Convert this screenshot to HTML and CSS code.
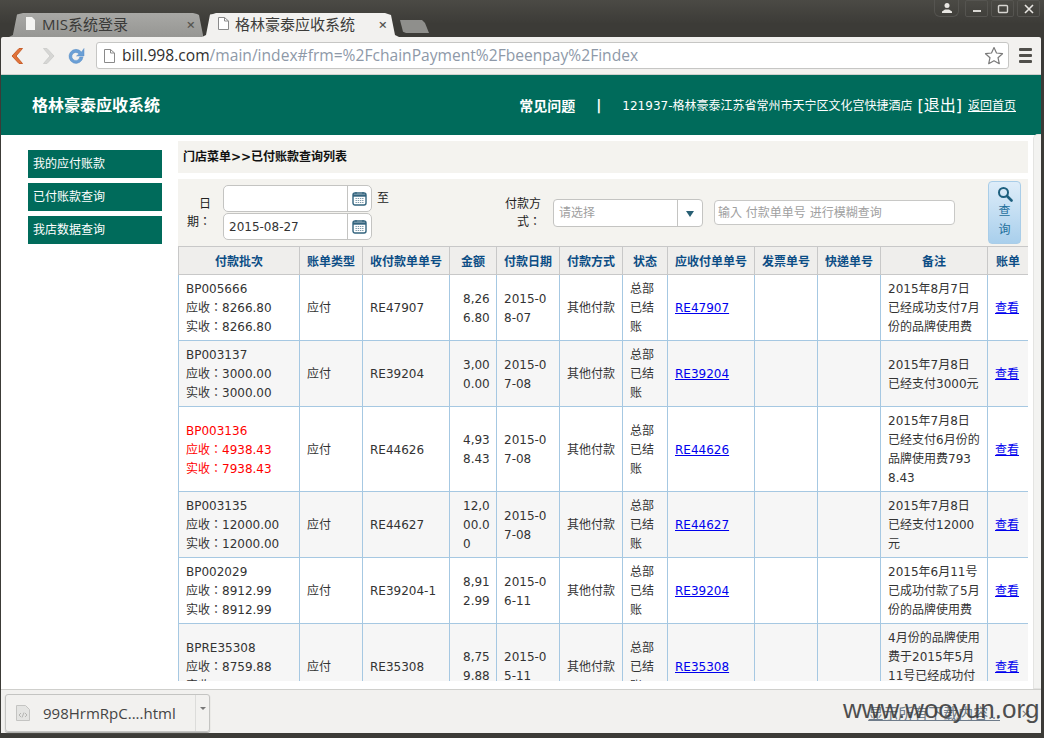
FILE: index.html
```html
<!DOCTYPE html>
<html lang="en">
<head>
<meta charset="UTF-8">
<title>格林豪泰应收系统</title>
<link rel="stylesheet" href="styles.css">
</head>
<body>
<div class="window">

  <!-- browser tabs -->
  <div class="titlebar">
    <div class="tab tab-off">
      <svg class="file-icon" width="11" height="13" viewBox="0 0 11 13"><path d="M1 0h6l3 3v10H1z" fill="#f4f4f2"/></svg>
      <span class="tab-title">MIS系统登录</span>
      <span class="tab-close">×</span>
    </div>
    <div class="tab tab-on">
      <svg class="file-icon" width="11" height="13" viewBox="0 0 11 13"><path d="M.5.5h6l4 3.5v8.500H.5z" fill="#fff" stroke="#8a8a8a"/><path d="M6.500.5V4h4" fill="none" stroke="#8a8a8a"/></svg>
      <span class="tab-title">格林豪泰应收系统</span>
      <span class="tab-close">×</span>
    </div>
    <div class="tab-new"></div>
    <div class="win-btns">
      <div class="win-btn win-user"><svg width="12" height="12" viewBox="0 0 12 12"><circle cx="6" cy="3.500" r="2.500" fill="#e8e6e2"/><path d="M1 11V9.500L4 7.500h4l3 2V11z" fill="#e8e6e2"/></svg></div>
      <div class="win-btn"><svg width="12" height="12" viewBox="0 0 12 12"><path d="M2 8h8" stroke="#d8d6d2" stroke-width="2"/></svg></div>
      <div class="win-btn"><svg width="12" height="12" viewBox="0 0 12 12"><rect x="1.500" y="2.500" width="9" height="7" rx="1" fill="none" stroke="#d8d6d2" stroke-width="1.400"/></svg></div>
      <div class="win-btn"><svg width="12" height="12" viewBox="0 0 12 12"><path d="M2 2l8 8M10 2l-8 8" stroke="#e8e6e2" stroke-width="1.600"/></svg></div>
    </div>
  </div>

  <!-- address bar -->
  <div class="toolbar">
    <svg class="nav-icon" width="16" height="18" viewBox="0 0 16 18"><path d="M10 1.500L3 9l7 7.500h3.500L7 9l6.500-7.500z" fill="#e2733a" stroke="#c8602c" stroke-width="1" stroke-linejoin="round"/></svg>
    <svg class="nav-icon nav-fwd" width="16" height="18" viewBox="0 0 16 18"><path d="M6 1.500L13 9l-7 7.500H2.500L9 9 2.500 1.500z" fill="#d6d6d4" stroke="#cfcfcd" stroke-linejoin="round"/></svg>
    <svg class="nav-icon nav-reload" width="18" height="18" viewBox="0 0 18 18"><path d="M14.500 5A7 7 0 1 0 16 10h-3.200a4 4 0 1 1-.8-3L9.500 9H17V1.500z" fill="#6a9fd6" stroke="#5a8ec4" stroke-width=".5"/></svg>
    <div class="omnibox">
      <svg class="file-icon" width="11" height="14" viewBox="0 0 11 14"><path d="M.5.500h6l4 3.500v9.500H.5z" fill="#fff" stroke="#8a8a8a"/><path d="M6.500.5V4h4" fill="none" stroke="#8a8a8a"/></svg>
      <span class="url"><span class="url-host">bill.998.com</span>/main/index#frm=%2FchainPayment%2Fbeenpay%2Findex</span>
      <svg class="star" width="20" height="19" viewBox="0 0 20 19"><path d="M10 1.500l2.500 5.500 6 .7-4.500 4 1.300 6L10 14.700 4.700 17.700l1.300-6-4.500-4 6-.7z" fill="#fff" stroke="#7a7a7a" stroke-width="1.200" stroke-linejoin="round"/></svg>
    </div>
    <div class="menu-btn"><i></i><i></i><i></i></div>
  </div>

  <!-- the page -->
  <div class="page">
    <div class="top">
      <div class="sys-name">格林豪泰应收系统</div>
      <div class="top-right">
        <span class="faq">常见问题</span>
        <span class="sep">|</span>
        <span class="shop">121937-格林豪泰江苏省常州市天宁区文化宫快捷酒店</span>
        <span class="logout">[退出]</span>
        <a class="home-link">返回首页</a>
      </div>
    </div>

    <div class="main">
      <div class="side">
        <div class="side-item">我的应付账款</div>
        <div class="side-item">已付账款查询</div>
        <div class="side-item">我店数据查询</div>
      </div>

      <div class="content">
        <div class="crumb">门店菜单&gt;&gt;已付账款查询列表</div>

        <div class="filter">
          <div class="f-label f-date">日期：</div>
          <div class="f-dates">
            <div class="date-row">
              <div class="date-box"><span class="date-val"></span><span class="date-btn"><svg width="15" height="15" viewBox="0 0 15 15"><use href="#cal"/></svg></span></div>
              <span class="to">至</span>
            </div>
            <div class="date-row">
              <div class="date-box"><span class="date-val">2015-08-27</span><span class="date-btn"><svg width="15" height="15" viewBox="0 0 15 15"><use href="#cal"/></svg></span></div>
            </div>
          </div>
          <div class="f-label f-way">付款方式：</div>
          <div class="select-box"><span class="select-val">请选择</span><span class="select-btn"></span></div>
          <div class="search-box">输入 付款单单号 进行模糊查询</div>
          <div class="query-btn">
            <svg width="16" height="16" viewBox="0 0 16 16"><circle cx="6.500" cy="6.500" r="4.500" fill="none" stroke="#1d5f7e" stroke-width="2"/><path d="M10 10l4.500 4.500" stroke="#1d5f7e" stroke-width="2.600" stroke-linecap="round"/></svg>
            <span>查询</span>
          </div>
        </div>

        <div class="table-clip">
          <table class="bills">
            <colgroup>
              <col class="c1"><col class="c2"><col class="c3"><col class="c4"><col class="c5"><col class="c6">
              <col class="c7"><col class="c8"><col class="c9"><col class="c10"><col class="c11"><col class="c12">
            </colgroup>
            <thead>
              <tr><th>付款批次</th><th>账单类型</th><th>收付款单单号</th><th>金额</th><th>付款日期</th><th>付款方式</th><th>状态</th><th>应收付单单号</th><th>发票单号</th><th>快递单号</th><th>备注</th><th>账单</th></tr>
            </thead>
            <tbody>
              <tr>
                <td>BP005666<br>应收：8266.80<br>实收：8266.80</td><td>应付</td><td>RE47907</td><td class="brk amt">8,266.80</td><td class="brk">2015-08-07</td><td>其他付款</td><td>总部已结账</td><td><a href="#">RE47907</a></td><td></td><td></td><td>2015年8月7日已经成功支付7月份的品牌使用费</td><td><a href="#">查看</a></td>
              </tr>
              <tr>
                <td>BP003137<br>应收：3000.00<br>实收：3000.00</td><td>应付</td><td>RE39204</td><td class="brk amt">3,000.00</td><td class="brk">2015-07-08</td><td>其他付款</td><td>总部已结账</td><td><a href="#">RE39204</a></td><td></td><td></td><td>2015年7月8日已经支付3000元</td><td><a href="#">查看</a></td>
              </tr>
              <tr>
                <td class="red">BP003136<br>应收：4938.43<br>实收：7938.43</td><td>应付</td><td>RE44626</td><td class="brk amt">4,938.43</td><td class="brk">2015-07-08</td><td>其他付款</td><td>总部已结账</td><td><a href="#">RE44626</a></td><td></td><td></td><td class="brk">2015年7月8日已经支付6月份的品牌使用费7938.43</td><td><a href="#">查看</a></td>
              </tr>
              <tr>
                <td>BP003135<br>应收：12000.00<br>实收：12000.00</td><td>应付</td><td>RE44627</td><td class="brk amt">12,000.00</td><td class="brk">2015-07-08</td><td>其他付款</td><td>总部已结账</td><td><a href="#">RE44627</a></td><td></td><td></td><td>2015年7月8日已经支付12000元</td><td><a href="#">查看</a></td>
              </tr>
              <tr>
                <td>BP002029<br>应收：8912.99<br>实收：8912.99</td><td>应付</td><td>RE39204-1</td><td class="brk amt">8,912.99</td><td class="brk">2015-06-11</td><td>其他付款</td><td>总部已结账</td><td><a href="#">RE39204</a></td><td></td><td></td><td>2015年6月11号已成功付款了5月份的品牌使用费</td><td><a href="#">查看</a></td>
              </tr>
              <tr>
                <td>BPRE35308<br>应收：8759.88<br>实收：8759.88</td><td>应付</td><td>RE35308</td><td class="brk amt">8,759.88</td><td class="brk">2015-05-11</td><td>其他付款</td><td>总部已结账</td><td><a href="#">RE35308</a></td><td></td><td></td><td>4月份的品牌使用费于2015年5月11号已经成功付款了</td><td><a href="#">查看</a></td>
              </tr>
            </tbody>
          </table>
        </div>
      </div>

      <div class="scrollbar"></div>
    </div>
  </div>

  <!-- download shelf -->
  <div class="shelf">
    <div class="dl-item">
      <svg class="dl-icon" width="14" height="16" viewBox="0 0 14 16"><path d="M.5.500h9l4 4v11H.5z" fill="#e4e4e2" stroke="#c4c4c2"/><path d="M5 8L3 10l2 2M9 8l2 2-2 2M8 7.500L6 12.500" fill="none" stroke="#a8a8a6" stroke-width=".8"/></svg>
      <span class="dl-name">998HrmRpC....html</span>
      <span class="dl-arrow"></span>
    </div>
    <div class="show-all">显示所有下载内容...</div>
    <span class="shelf-close">×</span>
  </div>
  <div class="watermark">www.wooyun.org</div>
</div>

<svg class="defs" width="0" height="0">
  <symbol id="cal" viewBox="0 0 15 15">
    <rect x="1" y="2" width="13" height="12" rx="2" fill="#fff" stroke="#33647e" stroke-width="1.400"/>
    <path d="M1 4.500h13" stroke="#33647e" stroke-width="2.400"/>
    <path d="M4 1v2M11 1v2" stroke="#33647e" stroke-width="1.200"/>
    <path d="M3.500 7.500h8M3.500 9.500h8M3.500 11.500h8" stroke="#7d9aaa" stroke-width="1" stroke-dasharray="1.400 .8"/>
  </symbol>
</svg>
</body>
</html>
```

FILE: styles.css
```css
html, body {
  margin: 0;
  padding: 0;
  background: #fff;
}

body {
  width: 1048px;
  height: 738px;
  overflow: hidden;
  font-family: "DejaVu Sans", "Noto Sans CJK SC", sans-serif;
  font-size: 12px;
}

.window {
  position: relative;
  width: 1044px;
  height: 738px;
  background: #3c3b37;
  display: flex;
  flex-direction: column;
  box-sizing: border-box;
  padding: 0 3px 5px 1px;
}

.defs {
  position: absolute;
}

/* title bar and tabs */
.titlebar {
  height: 37px;
  flex: none;
  display: flex;
  align-items: flex-end;
  padding-left: 9px;
  margin: 0 -3px 0 -1px;
  background: linear-gradient(#4b4a45 0, #3c3b37 24px);
  font-family: "Open Sans", "Noto Sans CJK SC", sans-serif;
}

.tab {
  height: 24px;
  width: 194px;
  box-sizing: border-box;
  display: flex;
  align-items: center;
  padding: 0 8px 3px 16px;
  font-size: 15px;
  clip-path: polygon(0 100%, 2% 92%, 8px 6%, 10px 1px, 14px 0, 184px 0, 188px 1px, 190px 8%, 194px 92%, 100% 100%);
}

.tab-off {
  background: linear-gradient(#a8a8a5, #969693);
  color: #3a3a38;
  margin-right: -1px;
}

.tab-on {
  background: #f2f1ef;
  color: #3c3c3a;
  width: 197px;
  padding-right: 12px;
  clip-path: polygon(0 100%, 4px 92%, 8px 6%, 11px 1px, 14px 0, 183px 0, 186px 1px, 189px 8%, 193px 92%, 100% 100%);
}

.file-icon {
  flex: none;
  margin-right: 6px;
}

.tab-title {
  flex: 1;
  white-space: nowrap;
}

.tab-close {
  font-size: 15px;
  font-weight: 600;
  color: #55544f;
}

.tab-new {
  width: 31px;
  height: 13px;
  margin: 0 0 4px 1px;
  background: #8f8f8c;
  clip-path: polygon(0 0, 22px 0, 25px 3px, 29px 100%, 6px 100%, 3px 90%);
}

.win-btns {
  margin-left: auto;
  margin-right: 4px;
  align-self: flex-start;
  display: flex;
  gap: 3px;
}

.win-btn {
  width: 21px;
  height: 15px;
  border: 1px solid #555450;
  border-radius: 2px;
  display: flex;
  align-items: center;
  justify-content: center;
}

.win-user {
  width: 23px;
  height: 15px;
  margin-right: 3px;
  border-radius: 0 0 6px 6px;
  border-top: none;
  padding-bottom: 1px;
}

/* address bar */
.toolbar {
  height: 38px;
  flex: none;
  display: flex;
  align-items: center;
  background: #f2f1ef;
  border-bottom: 1px solid #cfcfcc;
  box-sizing: border-box;
  padding: 0 9px 0 8px;
  border-radius: 2px 2px 0 0;
}

.nav-fwd {
  margin-left: 16px;
}

.nav-reload {
  margin-left: 10px;
  margin-right: 11px;
}

.omnibox {
  flex: 1;
  height: 25px;
  background: #fff;
  border: 1px solid #c6c6c4;
  border-radius: 3px;
  display: flex;
  align-items: center;
  padding: 0 4px 0 7px;
}

.omnibox .file-icon {
  margin-right: 7px;
}

.url {
  flex: 1;
  font-family: "Open Sans", sans-serif;
  font-size: 15.6px;
  color: #8e99a8;
  white-space: nowrap;
  margin-top: -2px;
}

.url-host {
  color: #2f2f2f;
}

.menu-btn {
  margin-left: 10px;
  width: 13px;
  display: flex;
  flex-direction: column;
  gap: 3px;
}

.menu-btn i {
  display: block;
  height: 3px;
  border-radius: 1px;
  background: #504f4b;
}

/* page */
.page {
  flex: 1;
  min-height: 0;
  background: #fff;
  display: flex;
  flex-direction: column;
}

.top {
  height: 60px;
  flex: none;
  background: #006b5b;
  color: #fff;
  display: flex;
  align-items: center;
  justify-content: space-between;
  padding: 0 25px 0 31px;
}

.sys-name {
  font-size: 16px;
  font-weight: bold;
  margin-top: -3px;
}

.top-right {
  display: flex;
  align-items: center;
  margin-top: -1px;
}

.faq {
  font-size: 14px;
  font-weight: bold;
}

.sep {
  font-size: 14px;
  font-weight: bold;
  margin: 0 21px 0 21px;
}

.shop {
  font-size: 12px;
}

.logout {
  font-size: 16px;
  margin-left: 5px;
  margin-top: -2px;
}

.home-link {
  font-size: 12px;
  text-decoration: underline;
  margin-left: 6px;
}

.main {
  flex: 1;
  min-height: 0;
  display: flex;
  position: relative;
  padding: 6px 0 8px;
}

.side {
  width: 134px;
  margin: 9px 16px 0 27px;
  flex: none;
  display: flex;
  flex-direction: column;
  gap: 5px;
}

.side-item {
  height: 28px;
  line-height: 28px;
  background: #006b5b;
  color: #fff;
  padding-left: 5px;
}

.content {
  width: 850px;
  flex: none;
  display: flex;
  flex-direction: column;
  min-height: 0;
}

.crumb {
  height: 32px;
  line-height: 33px;
  flex: none;
  background: #f4f3ef;
  color: #111;
  font-weight: bold;
  padding-left: 5px;
}

.filter {
  height: 67px;
  flex: none;
  margin-top: 6px;
  background: #f4f3ef;
  display: flex;
  align-items: center;
  color: #222;
  font-family: "DejaVu Sans", "Noto Sans CJK TC", sans-serif;
}

.f-label {
  text-align: right;
  line-height: 18px;
}

.f-date {
  width: 33px;
  margin-left: 0;
}

.f-dates {
  margin-left: 12px;
  display: flex;
  flex-direction: column;
  gap: 1px;
}

.date-row {
  display: flex;
  align-items: flex-start;
  height: 27px;
}

.date-box {
  width: 147px;
  height: 25px;
  border: 1px solid #c4c4c2;
  border-radius: 5px;
  background: #fff;
  display: flex;
}

.date-val {
  flex: 1;
  line-height: 26px;
  padding-left: 5px;
  color: #333;
}

.date-btn {
  width: 23px;
  border-left: 1px solid #c4c4c2;
  display: flex;
  align-items: center;
  justify-content: center;
}

.to {
  margin: 3px 0 0 5px;
}

.f-way {
  width: 45px;
  margin-left: 107px;
}

.select-box {
  width: 148px;
  height: 26px;
  margin-left: 12px;
  border: 1px solid #c4c4c2;
  border-radius: 4px;
  background: #fff;
  display: flex;
}

.select-val {
  flex: 1;
  line-height: 27px;
  padding-left: 5px;
  color: #a0a0a0;
}

.select-btn {
  width: 24px;
  border-left: 1px solid #c4c4c2;
  position: relative;
}

.select-btn::after {
  content: "";
  position: absolute;
  left: 8px;
  top: 11px;
  border-left: 4px solid transparent;
  border-right: 4px solid transparent;
  border-top: 6px solid #285f74;
}

.search-box {
  width: 236px;
  height: 23px;
  line-height: 24px;
  margin-left: 11px;
  padding-left: 3px;
  border: 1px solid #c8c8c6;
  border-radius: 4px;
  background: #fff;
  color: #a0a0a0;
}

.query-btn {
  width: 33px;
  height: 63px;
  margin-left: 33px;
  box-sizing: border-box;
  border: 1px solid #a9cde8;
  border-radius: 4px;
  background: linear-gradient(#deedf9, #a9cfec);
  color: #1e6f9c;
  font-size: 12px;
  line-height: 19px;
  text-align: center;
  padding-top: 4px;
  display: flex;
  flex-direction: column;
  align-items: center;
}

.query-btn span {
  width: 14px;
}

.table-clip {
  flex: 1;
  min-height: 0;
  overflow: hidden;
}

.bills {
  width: 850px;
  table-layout: fixed;
  border-collapse: collapse;
  color: #333;
  font-size: 12px;
  line-height: 19px;
  font-family: "DejaVu Sans", "Noto Sans CJK TC", sans-serif;
}

.c1 { width: 121px; }
.c2 { width: 63px; }
.c3 { width: 87px; }
.c4 { width: 47px; }
.c5 { width: 63px; }
.c6 { width: 63px; }
.c7 { width: 45px; }
.c8 { width: 87px; }
.c9 { width: 63px; }
.c10 { width: 63px; }
.c11 { width: 107px; }
.c12 { width: 41px; }

.bills th {
  height: 24px;
  padding: 3px 0 0;
  background: #efeeec;
  border: 1px solid #c8c8c8;
  color: #0c4d85;
  font-weight: bold;
}

.bills td {
  padding: 5px 7px 3px;
  border: 1px solid #a6c8e2;
  word-break: normal;
  vertical-align: middle;
}

.bills td:last-child {
  border-right-color: #c8c8c8;
  padding: 5px 0 3px 7px;
}

.bills tbody tr:nth-child(even) td {
  background: #f6f6f6;
}

.bills td.brk {
  word-break: break-all;
}

.bills td.amt {
  padding-left: 13px;
  padding-right: 5px;
}

.bills td.red {
  color: #f00;
}

.bills a {
  color: #00e;
  text-decoration: underline;
}

.scrollbar {
  position: absolute;
  right: 0;
  top: -1px;
  bottom: 0;
  width: 7px;
  border: 1px solid #e4e4e2;
  border-right: none;
  border-radius: 5px 0 0 0;
  background: #f3f3f1;
}

/* downloads */
.shelf {
  height: 44px;
  flex: none;
  background: #f2f1ef;
  border-top: 1px solid #cfcfcc;
  box-sizing: border-box;
  display: flex;
  align-items: center;
  padding: 2px 0 0 4px;
  font-family: "Open Sans", "Noto Sans CJK SC", sans-serif;
}

.dl-item {
  width: 205px;
  height: 38px;
  box-sizing: border-box;
  border: 1px solid #c4c4c2;
  border-radius: 3px;
  display: flex;
  align-items: center;
  padding-left: 10px;
  box-shadow: 0 1px 1px #a8a8a6;
}

.dl-icon {
  flex: none;
  margin-right: 13px;
}

.dl-name {
  flex: 1;
  font-size: 15px;
  color: #444;
}

.dl-arrow {
  align-self: stretch;
  width: 13px;
  border-left: 1px solid #dcdcda;
  position: relative;
}

.dl-arrow::after {
  content: "";
  position: absolute;
  left: 4px;
  top: 12px;
  border-left: 3px solid transparent;
  border-right: 3px solid transparent;
  border-top: 3px solid #777;
}

.show-all {
  margin-left: auto;
  margin-right: 41px;
  font-size: 15px;
  color: #6f7c8a;
  text-decoration: underline;
}

.shelf-close {
  position: absolute;
  right: 14px;
  bottom: 15px;
  font-size: 15px;
  color: #777;
}

.watermark {
  position: absolute;
  left: 843px;
  top: 694px;
  font-family: "Liberation Sans", sans-serif;
  font-size: 26px;
  color: #3d3d3d;
  opacity: .9;
  white-space: nowrap;
}
```
